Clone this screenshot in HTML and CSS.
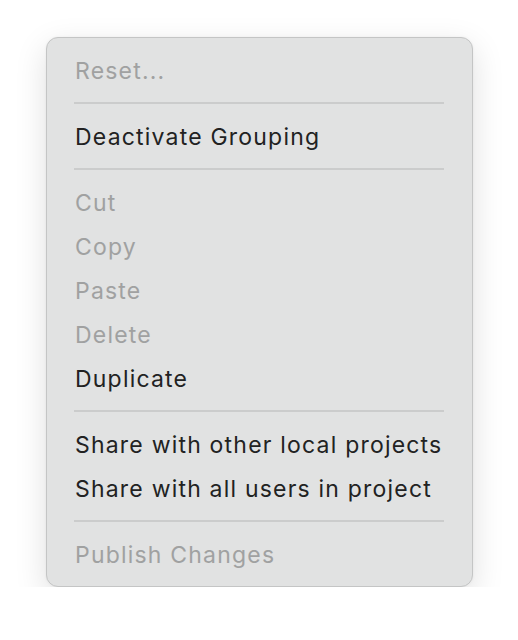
FILE: index.html
```html
<!DOCTYPE html>
<html lang="en">
<head>
  <meta charset="UTF-8">
  <meta name="viewport" content="width=device-width, initial-scale=1.0">
  <title>Context Menu</title>
  <link rel="stylesheet" href="styles.css">
</head>
<body>
  <div class="menu">
    <div class="item disabled">Reset...</div>
    <div class="separator"></div>
    <div class="item">Deactivate Grouping</div>
    <div class="separator"></div>
    <div class="item disabled">Cut</div>
    <div class="item disabled">Copy</div>
    <div class="item disabled">Paste</div>
    <div class="item disabled">Delete</div>
    <div class="item">Duplicate</div>
    <div class="separator"></div>
    <div class="item">Share with other local projects</div>
    <div class="item">Share with all users in project</div>
    <div class="separator"></div>
    <div class="item disabled">Publish Changes</div>
  </div>
</body>
</html>
```

FILE: styles.css
```css
body {
  margin: 0;
  padding: 37px 0 0 46px;
  background: #ffffff;
  font-family: Inter, 'Noto Sans', sans-serif;
}

.menu {
  width: 427px;
  box-sizing: border-box;
  padding: 10px 0;
  background: #e1e2e2;
  border: 1px solid #c4c5c5;
  border-radius: 12px;
  box-shadow: 0 10px 32px rgba(0,0,0,0.13), 0 0 3px rgba(0,0,0,0.05);
}

.item {
  height: 42px;
  line-height: 42px;
  padding: 2px 28px 0;
  font-size: 23px;
  letter-spacing: 1.2px;
  color: #222222;
  white-space: nowrap;
}

.item.disabled {
  color: #a0a1a1;
}

.separator {
  height: 2px;
  margin: 10px 28px 10px 27px;
  background: #cbcccc;
}
```
